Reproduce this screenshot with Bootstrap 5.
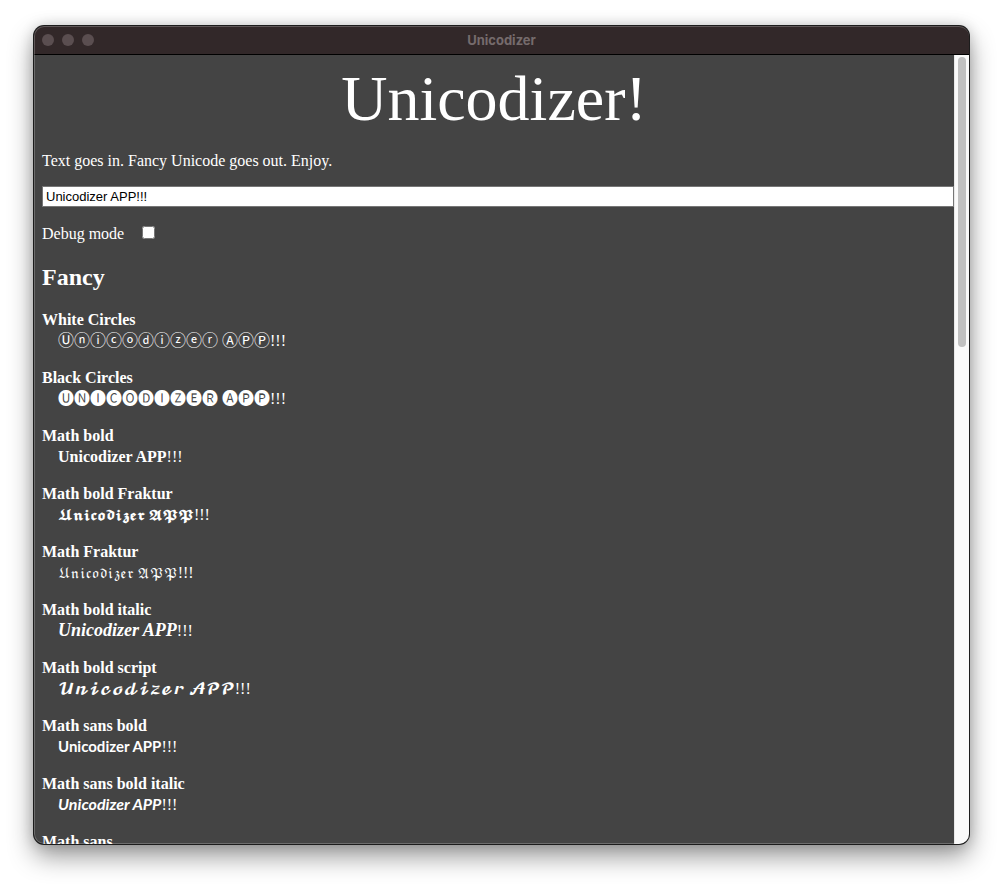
<!DOCTYPE html>
<html lang="en">
<head>
<meta charset="utf-8">
<meta name="viewport" content="width=device-width, initial-scale=1">
<title>Unicodizer</title>
<link href="https://cdn.jsdelivr.net/npm/bootstrap@5.3.0/dist/css/bootstrap.min.css" rel="stylesheet">
<style>
  body { background: #fff; padding: 26px 34px 42px; font-family: "Liberation Serif", "Noto Sans CJK JP", "DejaVu Math TeX Gyre", "DejaVu Sans", serif; }
  .app-window { background: #444; border-radius: 10px; box-shadow: 0 0 0 1px #1c1c1c, 0 12px 26px rgba(0,0,0,.42), 0 0 14px rgba(0,0,0,.18); }
  .app-window::after { content: ""; position: absolute; inset: 0; border: 1px solid rgba(255,255,255,.22); border-right-width: 0; border-radius: 10px; pointer-events: none; }
  .title-bar { height: 29px; background: #322829; border-bottom: 1px solid #000; padding: 0 8px; }
  .dot { width: 12px; height: 12px; background: #5a4e50; }
  .window-title { font: 700 13px/27px Inter, "Liberation Sans", sans-serif; color: #756b6c; }
  .page { padding: 7px 0 0 8px; font-size: 16px; line-height: 20px; }
  .page h1 { font-size: 64px; line-height: 74px; font-weight: 400; margin: 0 8px 15px 0; }
  .page p { margin-bottom: 15px; }
  .source-text { height: 21px; padding: 0 3px; border: 1px solid #767676; font: 13px/17px "Liberation Sans", sans-serif; color: #000; background: #fff; }
  .debug-row { gap: 18px; margin: 17px 0 19px; }
  .debug-row input { width: 13px; height: 13px; margin: 0 0 3px; }
  .page h2 { font-size: 24px; line-height: 28px; font-weight: 700; margin: 0 0 19px; }
  .page dl, .page dd { margin: 0; }
  .page dt { height: 20px; }
  .page dd { height: 22px; line-height: 22px; padding-left: 16px; margin-bottom: 16px; white-space: nowrap; }
  .fraktur { font-size: 13px; line-height: 1; }
  .script-bold { font-size: 15px; line-height: 1; }
  .serif-slant { font-size: 18px; line-height: 1; }
  .sans-bold { font-family: Lato, "Liberation Sans", sans-serif; font-size: 15px; line-height: 1; }
  .sans-bold.fst-italic { font-size: 16px; }
  .scroll-track { width: 15px; background: #fafafa; border-left: 1px solid #e8e8e8; padding: 2px 3px; }
  .scroll-thumb { height: 37%; width: 8px; background: #c1c1c1; }
</style>
</head>
<body class="vh-100 overflow-hidden">
<div class="app-window position-relative h-100 d-flex flex-column overflow-hidden text-white">
  <header class="title-bar d-flex align-items-center flex-shrink-0">
    <div class="d-flex gap-2 flex-fill">
      <span class="dot rounded-circle"></span><span class="dot rounded-circle"></span><span class="dot rounded-circle"></span>
    </div>
    <div class="window-title">Unicodizer</div>
    <div class="flex-fill d-flex gap-2 invisible">
      <span class="dot"></span><span class="dot"></span><span class="dot"></span>
    </div>
  </header>
  <div class="d-flex flex-grow-1 overflow-hidden">
    <main class="page flex-grow-1 overflow-hidden">
      <h1 class="text-center">Unicodizer!</h1>
      <p>Text goes in. Fancy Unicode goes out. Enjoy.</p>
      <input class="source-text d-block w-100 rounded-0" type="text" value="Unicodizer APP!!!" aria-label="Text to convert">
      <div class="debug-row d-flex align-items-center">
        <label for="debug">Debug mode</label>
        <input type="checkbox" id="debug">
      </div>
      <h2>Fancy</h2>
      <dl>
        <dt>White Circles</dt><dd>Ⓤⓝⓘⓒⓞⓓⓘⓩⓔⓡ ⒶⓅⓅ!!!</dd>
        <dt>Black Circles</dt><dd>🅤🅝🅘🅒🅞🅓🅘🅩🅔🅡 🅐🅟🅟!!!</dd>
        <dt>Math bold</dt><dd><b>Unicodizer APP</b>!!!</dd>
        <dt>Math bold Fraktur</dt><dd><b class="fraktur">𝖀𝖓𝖎𝖈𝖔𝖉𝖎𝖟𝖊𝖗 𝕬𝕻𝕻</b>!!!</dd>
        <dt>Math Fraktur</dt><dd><span class="fraktur">𝔘𝔫𝔦𝔠𝔬𝔡𝔦𝔷𝔢𝔯 𝔄𝔓𝔓</span>!!!</dd>
        <dt>Math bold italic</dt><dd><b class="serif-slant fst-italic">Unicodizer APP</b>!!!</dd>
        <dt>Math bold script</dt><dd><span class="script-bold">𝓤𝓷𝓲𝓬𝓸𝓭𝓲𝔃𝓮𝓻 𝓐𝓟𝓟</span>!!!</dd>
        <dt>Math sans bold</dt><dd><b class="sans-bold">Unicodizer APP</b>!!!</dd>
        <dt>Math sans bold italic</dt><dd><b class="sans-bold fst-italic">Unicodizer APP</b>!!!</dd>
        <dt>Math sans</dt>
      </dl>
    </main>
    <div class="scroll-track flex-shrink-0"><div class="scroll-thumb rounded-pill"></div></div>
  </div>
</div>
<script src="https://cdn.jsdelivr.net/npm/bootstrap@5.3.0/dist/js/bootstrap.bundle.min.js"></script>
</body>
</html>
